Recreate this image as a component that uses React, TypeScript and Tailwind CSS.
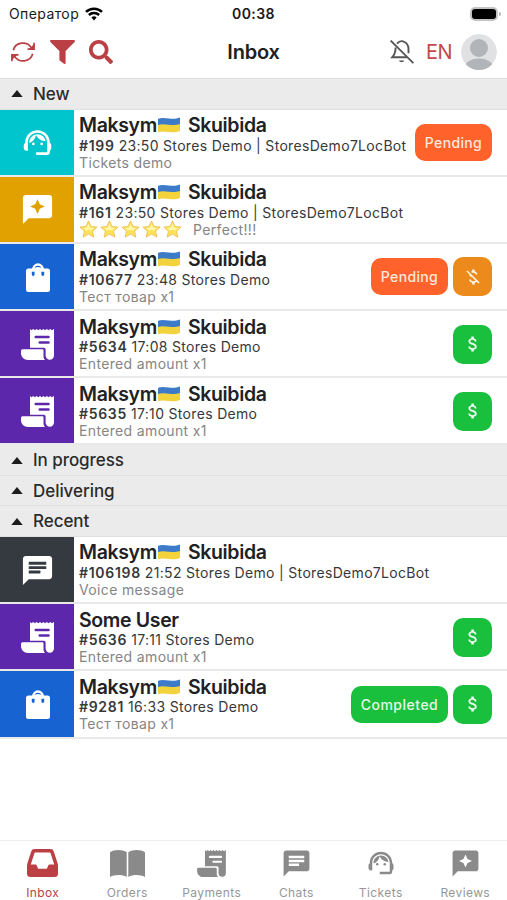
import React from "react";
import { FaSearch } from "react-icons/fa";
import {
  MdAttachMoney,
  MdChat,
  MdMoneyOff,
  MdReviews,
  MdSupportAgent,
} from "react-icons/md";

type Kind = "ticket" | "review" | "order" | "payment" | "chat";

type Item = {
  kind: Kind;
  name?: string;
  id: string;
  info: string;
  note: string;
  stars?: boolean;
  status?: "Pending" | "Completed";
  paid?: boolean;
};

const newItems: Item[] = [
  { kind: "ticket", id: "#199", info: "23:50 Stores Demo | StoresDemo7LocBot", note: "Tickets demo", status: "Pending" },
  { kind: "review", id: "#161", info: "23:50 Stores Demo | StoresDemo7LocBot", note: "Perfect!!!", stars: true },
  { kind: "order", id: "#10677", info: "23:48 Stores Demo", note: "Тест товар x1", status: "Pending", paid: false },
  { kind: "payment", id: "#5634", info: "17:08 Stores Demo", note: "Entered amount x1", paid: true },
  { kind: "payment", id: "#5635", info: "17:10 Stores Demo", note: "Entered amount x1", paid: true },
];

const recentItems: Item[] = [
  { kind: "chat", id: "#106198", info: "21:52 Stores Demo | StoresDemo7LocBot", note: "Voice message" },
  { kind: "payment", name: "Some User", id: "#5636", info: "17:11 Stores Demo", note: "Entered amount x1", paid: true },
  { kind: "order", id: "#9281", info: "16:33 Stores Demo", note: "Тест товар x1", status: "Completed", paid: true },
];

const kindColors: Record<Kind, string> = {
  ticket: "bg-[#00c5cc]",
  review: "bg-[#e1a100]",
  order: "bg-[#1763d2]",
  payment: "bg-[#5d27ab]",
  chat: "bg-[#343a40]",
};

const BagIcon = ({ className }: { className?: string }) => (
  <svg viewBox="0 0 24 29" className={className} fill="none">
    <path d="M7.2 6.5a4.8 5 0 0 1 9.6 0" stroke="currentColor" strokeWidth="2.4" />
    <path
      fill="currentColor"
      fillRule="evenodd"
      d="M2.5 5.5h5.3q.9-1.5 4.2-1.500t4.200 1.500h5.300A2.500 2.500 0 0 1 24 8v18.500a2.500 2.500 0 0 1-2.500 2.500h-19A2.500 2.500 0 0 1 0 26.500V8A2.500 2.500 0 0 1 2.500 5.500ZM5.800 8.800v2.700a1.400 1.400 0 0 0 2.800 0V8.800Zm9.600 0v2.700a1.400 1.400 0 0 0 2.800 0V8.800Z"
    />
  </svg>
);

const ReceiptIcon = ({ className }: { className?: string }) => (
  <svg viewBox="0 0 33 31" className={className} fill="currentColor">
    <path
      fillRule="evenodd"
      d="M9 0l1.500 1.300L12.200 0l1.700 1.300L15.600 0l1.700 1.300L19 0l1.700 1.300L22.400 0l1.700 1.300L25.800 0l1.700 1.300L29.200 0l1.700 1.300L33 0v26.500a4.200 4.200 0 0 1-8.400 0V20.500a1.800 1.800 0 0 0-1.800-1.800H9ZM14.700 6.700a1.200 1.200 0 0 0 0 2.500H27.500a1.200 1.200 0 0 0 0-2.500ZM18.700 12.200a1.200 1.200 0 0 0 0 2.500h8.800a1.200 1.200 0 0 0 0-2.500Z"
    />
    <path d="M1.500 20.300h20a1 1 0 0 1 1 1v5.200c0 1.800.3 3.300 1.500 4.500H7c-4 0-7-3-7-7v-2.200a1.500 1.500 0 0 1 1.500-1.500Z" />
  </svg>
);

const RefreshIcon = () => (
  <svg viewBox="0 0 26 24" className="h-6 w-[26px] text-[#bb4045]" fill="none" stroke="currentColor">
    <path d="M3.300 10.200a9.800 9.300 0 0 1 18.100-2.300M22.700 13.800a9.800 9.300 0 0 1-18.100 2.300" strokeWidth="1.700" />
    <path d="M24.100 2.800v6.400h-6.600M1.900 21.200v-6.400h6.600" strokeWidth="1.700" />
    <path d="M24 4v5h-5ZM2 20v-5h5Z" fill="currentColor" stroke="none" />
  </svg>
);

const FunnelIcon = () => (
  <svg viewBox="0 0 25 24" className="h-6 w-[25px] text-[#bb4045]" fill="currentColor">
    <path d="M1 0h23c.9 0 1.300 1.200.6 1.900L15.600 11v12c0 .8-.9 1.300-1.600.8l-4-3a1.500 1.500 0 0 1-.6-1.200V11L.4 1.900C-.3 1.200.1 0 1 0Z" />
  </svg>
);

const BellOffIcon = () => (
  <svg viewBox="0 0 24 24" className="mr-3 size-6 text-[#555]" fill="none" stroke="currentColor" strokeWidth="1.900">
    <path d="M.6.6l22.800 22.600" />
    <path d="M5.600 7.500c0 5-.9 7-3.300 9.700H17" />
    <path d="M7 3.600C9 1.300 12 .6 14.500 2c3 1.500 4 3.800 4 7.200v4" />
    <path d="M9 20.500c.5 2.200 4.700 2.200 5.200 0Z" fill="currentColor" stroke="none" />
  </svg>
);

const TrayIcon = () => (
  <svg viewBox="0 0 31 28" className="h-7 w-[31px]" fill="currentColor">
    <path
      fillRule="evenodd"
      d="M7.500 0h16a3.500 3.500 0 0 1 3.300 2.400L30.800 15c.1.400.2.900.2 1.300V24.500a3.500 3.500 0 0 1-3.500 3.500h-24A3.500 3.500 0 0 1 0 24.500v-8.200c0-.4.100-.9.200-1.300L4.200 2.400A3.500 3.500 0 0 1 7.500 0Zm.9 3.600a1 1 0 0 0-1 .7L3.800 15.600H8.700a1 1 0 0 1 .9.600l1.300 3a1 1 0 0 0 .9.600h7.400a1 1 0 0 0 .9-.6l1.300-3a1 1 0 0 1 .9-.6h4.900L23.600 4.300a1 1 0 0 0-1-.7Z"
    />
  </svg>
);

const BookIcon = () => (
  <svg viewBox="0 0 35 27" className="h-[27px] w-[35px]" fill="currentColor">
    <path d="M0 2.200C4-.4 12-.8 16.700 2.200V27C12 24.300 4.500 24.600 0 27Z" />
    <path d="M18.300 2.200C23-.8 31-.4 35 2.200V27C30.500 24.600 23 24.300 18.300 27Z" />
  </svg>
);

const Flag = () => (
  <svg viewBox="0 0 22 16" className="ml-px mr-[8px] h-4 w-[22px] shrink-0">
    <path d="M0 1.800c4-1.500 7-.6 11-.2s7 .5 11-1V8H0Z" fill="#3d7bc8" />
    <path d="M0 8c4-1.200 7-.6 11-.2s7 .4 11-.8v7c-4 1.500-7 1.400-11 1s-7-1-11 .3Z" fill="#f3d33c" />
  </svg>
);

const Star = () => (
  <svg viewBox="0 0 20 19" className="h-[18px] w-[19px] shrink-0">
    <path
      d="M10 .9l2.700 5.900 6.400.7-4.800 4.300 1.400 6.300L10 14.900l-5.700 3.200 1.400-6.300L.9 7.500l6.400-.7Z"
      fill="#fde35a"
      stroke="#ecb54c"
      strokeWidth=".8"
      strokeLinejoin="round"
    />
    <path d="M10 3.800l1.700 4.200 4.400.5-3.400 2.700-2.700-1-2.700 1-3.400-2.700 4.400-.5Z" fill="#fff6a8" />
  </svg>
);

const KindIcon = ({ kind }: { kind: Kind }) => {
  switch (kind) {
    case "ticket":
      return <MdSupportAgent className="ml-px size-[33px]" />;
    case "review":
      return <MdReviews className="mt-px size-[35px]" />;
    case "order":
      return <BagIcon className="ml-0.5 mt-0.5 h-[29px] w-6" />;
    case "payment":
      return <ReceiptIcon className="ml-px mt-px h-[31px] w-[33px]" />;
    case "chat":
      return <MdChat className="mt-px size-[35px]" />;
  }
};

const InboxRow = ({ item }: { item: Item }) => (
  <div className="flex h-[67.2px] border-b-2 border-[#e9e9e9]">
    <div className={`flex w-[74px] shrink-0 items-center justify-center text-white ${kindColors[item.kind]}`}>
      <KindIcon kind={item.kind} />
    </div>
    <div className="flex min-w-0 flex-1 flex-col whitespace-nowrap pl-[5px] pt-[5px]">
      <div className="flex h-[22px] items-center pb-px text-[19.5px] font-semibold leading-[22px] tracking-[-0.35px] text-[#202124]">
        {item.name ? (
          <span>{item.name}</span>
        ) : (
          <>
            <span>Maksym</span>
            <Flag />
            <span>Skuibida</span>
          </>
        )}
      </div>
      <div className="flex h-[17px] items-center gap-1 text-[14px] leading-[17px] tracking-[0.32px] text-[#37383a]">
        <span className="font-semibold tracking-[0.7px]">{item.id}</span>
        <span>{item.info}</span>
      </div>
      <div className="flex h-[17px] items-center text-[14px] leading-[17px] tracking-[0.35px] text-[#858585]">
        {item.stars && (
          <div className="mr-[11px] flex gap-0.5">
            {[0, 1, 2, 3, 4].map((i) => (
              <Star key={i} />
            ))}
          </div>
        )}
        <span>{item.note}</span>
      </div>
    </div>
    <div className="flex shrink-0 items-center gap-[5px] pr-[15px] pt-px">
      {item.status === "Pending" && (
        <span className="flex h-[37px] w-[77px] items-center justify-center rounded-[10px] bg-[#ff632b] text-[14px] font-medium tracking-[0.35px] text-[#ffe9df]">
          Pending
        </span>
      )}
      {item.status === "Completed" && (
        <span className="flex h-[37px] w-[97px] items-center justify-center rounded-[10px] bg-[#19c03d] text-[14px] font-medium tracking-[0.5px] text-[#e4f9e8]">
          Completed
        </span>
      )}
      {item.paid === true && (
        <span className="flex size-[39px] items-center justify-center rounded-[10px] bg-[#19c03d] text-[#effbf1]">
          <MdAttachMoney className="size-5" />
        </span>
      )}
      {item.paid === false && (
        <span className="flex size-[39px] items-center justify-center rounded-[10px] bg-[#ec8b1c] text-[#fff5e8]">
          <MdMoneyOff className="size-5" />
        </span>
      )}
    </div>
  </div>
);

const SectionHeader = ({ title }: { title: string }) => (
  <div className="flex h-[30.5px] items-center border-b border-[#e0e0e0] bg-[#ebebeb] pl-[11px] text-[17px] font-medium tracking-[-0.05px] text-[#2b2b2b]">
    <svg viewBox="0 0 12 7" className="mr-[10px] h-[7px] w-3" fill="#1c1c1c">
      <path d="M6 0l5.700 7H.3Z" />
    </svg>
    <span className="pt-0.5">{title}</span>
  </div>
);

const tabs = [
  { label: "Inbox", icon: <TrayIcon /> },
  { label: "Orders", icon: <BookIcon /> },
  { label: "Payments", icon: <ReceiptIcon className="h-[27px] w-[29px]" /> },
  { label: "Chats", icon: <MdChat className="size-[31px]" /> },
  { label: "Tickets", icon: <MdSupportAgent className="size-[30px]" /> },
  { label: "Reviews", icon: <MdReviews className="size-[31px]" /> },
];

export default function App() {
  return (
    <div className="flex h-[900px] w-[507px] flex-col overflow-hidden bg-white font-['Inter',sans-serif]">
      <div className="grid h-[27px] shrink-0 grid-cols-3 items-center text-[14px] text-[#1a1a1a]">
        <div className="flex items-center gap-1.5 pl-[9px] tracking-[0.4px]">
          Оператор
          <svg viewBox="0 0 18 14" className="h-[14px] w-[18px]" fill="none" stroke="#000" strokeWidth="2.500">
            <path d="M1 4.900a11.500 11.500 0 0 1 16 0M3.900 8a7.300 7.300 0 0 1 10.200 0" />
            <path d="M9 13.500l-2.600-2.900a3.700 3.700 0 0 1 5.200 0Z" fill="#000" stroke="none" />
          </svg>
        </div>
        <div className="text-center font-semibold tracking-[0.4px]">00:38</div>
        <div className="flex items-center justify-end pr-[6px]">
          <div className="h-[14px] w-7 rounded-[5px] bg-[#c4c4c4] p-[2px]">
            <div className="h-full rounded-[3px] bg-black" />
          </div>
          <div className="ml-px h-1 w-0.5 rounded-r-full bg-[#b5b5b5]" />
        </div>
      </div>

      <header className="flex h-[51px] shrink-0 items-center pb-px">
        <div className="flex w-[180px] items-center gap-[14px] pl-2.5">
          <RefreshIcon />
          <FunnelIcon />
          <FaSearch className="size-6 text-[#bb4045]" />
        </div>
        <h1 className="flex-1 text-center text-[20px] font-semibold tracking-[-0.2px] text-[#202020]">Inbox</h1>
        <div className="flex w-[180px] items-center justify-end pr-2.5">
          <BellOffIcon />
          <span className="mr-[9px] text-[20px] tracking-[-0.5px] text-[#c5484d]">EN</span>
          <svg viewBox="0 0 36 36" className="size-9 rounded-full">
            <circle cx="18" cy="18" r="18" fill="#dfe1e3" />
            <circle cx="18" cy="14" r="9" fill="#b1b5b9" />
            <ellipse cx="18" cy="33" rx="14" ry="8.500" fill="#b1b5b9" />
          </svg>
        </div>
      </header>

      <main className="flex flex-1 flex-col border-t border-[#dedede]">
        <SectionHeader title="New" />
        {newItems.map((item) => (
          <InboxRow key={item.id} item={item} />
        ))}
        <SectionHeader title="In progress" />
        <SectionHeader title="Delivering" />
        <SectionHeader title="Recent" />
        {recentItems.map((item) => (
          <InboxRow key={item.id} item={item} />
        ))}
      </main>

      <nav className="grid h-[60px] shrink-0 grid-cols-6 border-t border-[#ececec] text-[#8a8a8a]">
        {tabs.map((tab, i) => (
          <div key={tab.label} className={`flex flex-col items-center pl-px ${i === 0 ? "text-[#bb4045]" : ""}`}>
            <div className="flex h-[44px] items-center justify-center">{tab.icon}</div>
            <span className={`text-[12px] leading-4 tracking-[0.4px] ${i === 0 ? "" : "text-[#979797]"}`}>
              {tab.label}
            </span>
          </div>
        ))}
      </nav>
    </div>
  );
}
